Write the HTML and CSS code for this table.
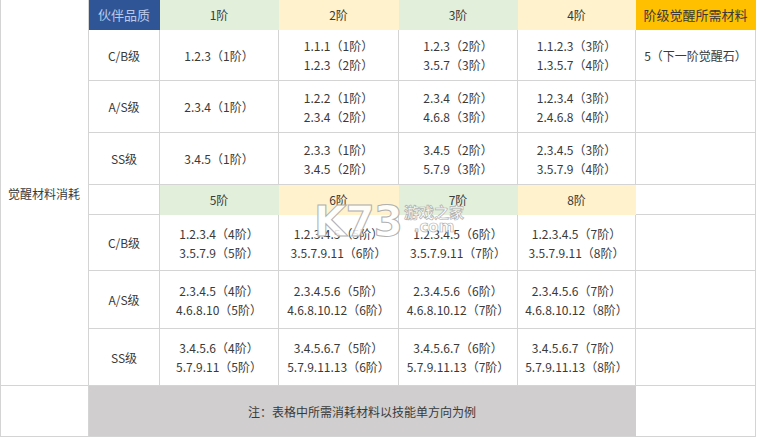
FILE: index.html
```html
<!DOCTYPE html>
<html lang="zh">
<head>
<meta charset="utf-8">
<link rel="stylesheet" href="styles.css">
</head>
<body>
<div class="page">
  <div class="table">
    <div class="cell side">觉醒材料消耗</div>
    <div class="cell hd blue">伙伴品质</div>
    <div class="cell hd green">1阶</div>
    <div class="cell hd yellow">2阶</div>
    <div class="cell hd green">3阶</div>
    <div class="cell hd yellow">4阶</div>
    <div class="cell hd orange">阶级觉醒所需材料</div>

    <div class="cell">C/B级</div>
    <div class="cell">1.2.3（1阶）</div>
    <div class="cell">1.1.1（1阶）<br>1.2.3（2阶）</div>
    <div class="cell">1.2.3（2阶）<br>3.5.7（3阶）</div>
    <div class="cell">1.1.2.3（3阶）<br>1.3.5.7（4阶）</div>
    <div class="cell">5（下一阶觉醒石）</div>

    <div class="cell">A/S级</div>
    <div class="cell">2.3.4（1阶）</div>
    <div class="cell">1.2.2（1阶）<br>2.3.4（2阶）</div>
    <div class="cell">2.3.4（2阶）<br>4.6.8（3阶）</div>
    <div class="cell">1.2.3.4（3阶）<br>2.4.6.8（4阶）</div>
    <div class="cell"></div>

    <div class="cell">SS级</div>
    <div class="cell">3.4.5（1阶）</div>
    <div class="cell">2.3.3（1阶）<br>3.4.5（2阶）</div>
    <div class="cell">3.4.5（2阶）<br>5.7.9（3阶）</div>
    <div class="cell">2.3.4.5（3阶）<br>3.5.7.9（4阶）</div>
    <div class="cell"></div>

    <div class="cell"></div>
    <div class="cell hd green">5阶</div>
    <div class="cell hd yellow">6阶</div>
    <div class="cell hd green">7阶</div>
    <div class="cell hd yellow">8阶</div>
    <div class="cell"></div>

    <div class="cell">C/B级</div>
    <div class="cell">1.2.3.4（4阶）<br>3.5.7.9（5阶）</div>
    <div class="cell">1.2.3.4.5（5阶）<br>3.5.7.9.11（6阶）</div>
    <div class="cell">1.2.3.4.5（6阶）<br>3.5.7.9.11（7阶）</div>
    <div class="cell">1.2.3.4.5（7阶）<br>3.5.7.9.11（8阶）</div>
    <div class="cell"></div>

    <div class="cell">A/S级</div>
    <div class="cell">2.3.4.5（4阶）<br>4.6.8.10（5阶）</div>
    <div class="cell">2.3.4.5.6（5阶）<br>4.6.8.10.12（6阶）</div>
    <div class="cell">2.3.4.5.6（6阶）<br>4.6.8.10.12（7阶）</div>
    <div class="cell">2.3.4.5.6（7阶）<br>4.6.8.10.12（8阶）</div>
    <div class="cell"></div>

    <div class="cell">SS级</div>
    <div class="cell">3.4.5.6（4阶）<br>5.7.9.11（5阶）</div>
    <div class="cell">3.4.5.6.7（5阶）<br>5.7.9.11.13（6阶）</div>
    <div class="cell">3.4.5.6.7（6阶）<br>5.7.9.11.13（7阶）</div>
    <div class="cell">3.4.5.6.7（7阶）<br>5.7.9.11.13（8阶）</div>
    <div class="cell"></div>

    <div class="cell blank"></div>
    <div class="cell note">注：表格中所需消耗材料以技能单方向为例</div>
    <div class="cell"></div>
  </div>
  <div class="watermark">
    <span class="wm-k">K73</span>
    <span class="wm-side"><span class="wm-cn">游戏之家</span><span class="wm-com">.com</span></span>
  </div>
</div>
</body>
</html>
```
FILE: styles.css
```css
* { box-sizing: border-box; }
html, body { margin: 0; padding: 0; background: #fff; }
body {
  font-family: "Noto Sans CJK SC", "Liberation Sans", sans-serif;
  font-size: 12px;
  color: #3a3a3a;
}
.page { position: relative; width: 757px; height: 438px; overflow: hidden; }
.table {
  display: grid;
  grid-template-columns: 88px 71px 119px 120px 119px 118px 120px;
  grid-template-rows: 30px 51px 52px 52px 30px 56px 58px 57px 51px;
  width: 755px;
  border-left: 1px solid #d4d4d4;
}
.cell {
  display: flex;
  align-items: center;
  justify-content: center;
  text-align: center;
  line-height: 19px;
  border-right: 1px solid #d4d4d4;
  border-bottom: 1px solid #d4d4d4;
  white-space: nowrap;
}
.side {
  grid-row: 1 / 9;
  justify-content: flex-start;
  padding-left: 7px;
  padding-top: 2px;
}
.hd { border-color: transparent; }
.blue { background: #2f5597; color: #b9c9e8; font-size: 13px; }
.green { background: #e2efda; }
.yellow { background: #fff2cc; }
.orange { background: #ffc000; font-size: 13px; }
.note {
  grid-column: 2 / 7;
  background: #d0cece;
  border-color: #d0cece;
  border-bottom-color: #d4d4d4;
}
.watermark {
  position: absolute;
  left: 314px;
  top: 201px;
  display: flex;
  align-items: flex-start;
  gap: 2px;
  pointer-events: none;
}
.wm-k {
  font-family: "DejaVu Sans", sans-serif;
  font-size: 42px;
  line-height: 42px;
  font-weight: bold;
  letter-spacing: -1px;
  color: rgba(255,255,255,0.88);
  -webkit-text-stroke: 1px #b0b0b0;
}
.wm-side { display: flex; flex-direction: column; align-items: center; padding-top: 3px; }
.wm-cn {
  font-size: 15px;
  line-height: 16px;
  font-weight: bold;
  color: rgba(255,255,255,0.88);
  -webkit-text-stroke: 0.7px #b0b0b0;
}
.wm-com {
  font-family: "DejaVu Sans", sans-serif;
  font-size: 15px;
  line-height: 14px;
  font-weight: bold;
  color: rgba(255,255,255,0.88);
  -webkit-text-stroke: 0.7px #b0b0b0;
}
```
